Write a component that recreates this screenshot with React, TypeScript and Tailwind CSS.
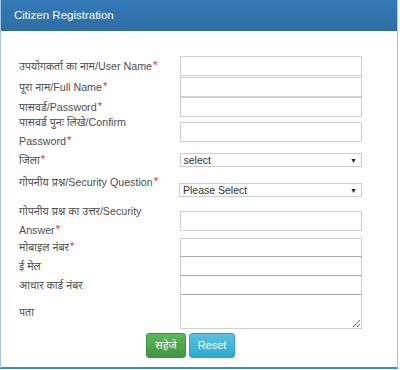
import React from 'react';

const font = { fontFamily: '"Liberation Sans", "Noto Sans", "Noto Sans Devanagari", "Lohit Devanagari", sans-serif' };

const Req = () => <sup className="text-[11px] text-[#e8262a] relative top-[-1px] ml-[1px]">*</sup>;

const inputCls = 'block w-[183px] h-[20px] bg-white border border-[#d0d0d0] outline-none';

function Select({ text }: { text: string }) {
  return (
    <div className="relative w-[183px] h-[14px] border border-[#cfcfcf] bg-white flex items-center">
      <span className="pl-[3px] text-[10.5px] leading-none text-[#333]">{text}</span>
      <span className="absolute right-[4px] top-[3px] text-[7px] leading-none text-[#222]">▼</span>
    </div>
  );
}

export default function App() {
  return (
    <div className="w-[400px] h-[370px] bg-white" style={font}>
      <div className="w-[398px] h-[369px] border-x border-x-[#a7c6e6] border-b-2 border-b-[#3d8bd0] flex flex-col">
        <div className="h-[31px] bg-gradient-to-b from-[#337ab7] to-[#2e6da4] flex items-center pl-[13px]">
          <span className="text-white text-[11.5px]">Citizen Registration</span>
        </div>

        <div className="pt-[25px] pl-[18px] text-[10.7px] text-[#505050]">
          <div className="w-[343px]">
            <div className="flex items-center h-[20px]">
              <div className="w-[161px]">उपयोगकर्ता का नाम/User Name<Req /></div>
              <input className={inputCls} />
            </div>
            <div className="flex items-center h-[20px] mt-[1px]">
              <div className="w-[161px]">पूरा नाम/Full Name<Req /></div>
              <input className={inputCls} />
            </div>
            <div className="flex items-center h-[20px]">
              <div className="w-[161px]">पासवर्ड/Password<Req /></div>
              <input className={inputCls} />
            </div>
            <div className="flex items-center h-[30px]">
              <div className="w-[161px] leading-[19px]">पासवर्ड पुनः लिखे/Confirm<br />Password<Req /></div>
              <input className={inputCls} />
            </div>
            <div className="flex items-center h-[26px]">
              <div className="w-[161px]">जिला<Req /></div>
              <Select text="select" />
            </div>
            <div className="flex items-start h-[30px]">
              <div className="w-[161px] leading-[19px]">गोपनीय प्रश्न/Security Question<Req /></div>
              <div className="mt-[10px]">
                <Select text="Please Select" />
              </div>
            </div>
            <div className="flex items-center h-[35px]">
              <div className="w-[161px] leading-[19px]">गोपनीय प्रश्न का उत्तर/Security<br />Answer<Req /></div>
              <input className={inputCls + ' h-[19px]'} />
            </div>
            <div className="flex items-center h-[19px]">
              <div className="w-[161px]">मोबाइल नंबर<Req /></div>
              <input className="block w-[183px] h-[19px] bg-white border border-[#d0d0d0] border-b-[#aaaaaa] outline-none" />
            </div>
            <div className="flex items-center h-[19px]">
              <div className="w-[161px]">ई मेल</div>
              <input className="block w-[183px] h-[19px] bg-white border border-[#d0d0d0] border-t-0 border-b-[#aaaaaa] outline-none" />
            </div>
            <div className="flex items-center h-[19px]">
              <div className="w-[161px]">आधार कार्ड नंबर</div>
              <input className="block w-[183px] h-[19px] bg-white border border-[#d0d0d0] border-t-0 border-b-[#aaaaaa] outline-none" />
            </div>
            <div className="flex items-center h-[34px]">
              <div className="w-[161px]">पता</div>
              <textarea className="block w-[183px] h-[34px] bg-white border border-[#d0d0d0] border-t-0 outline-none" />
            </div>
            <div className="flex justify-center gap-[3px] mt-[4px]">
              <button className="w-[40px] h-[25px] rounded-[3px] bg-gradient-to-b from-[#5cb85c] to-[#419641] border border-[#3e8f3e] text-white text-[11px]">सहेजे</button>
              <button className="w-[46px] h-[25px] rounded-[3px] bg-gradient-to-b from-[#5bc0de] to-[#2aabd2] border border-[#28a4c9] text-white text-[11px]">Reset</button>
            </div>
          </div>
        </div>
      </div>
    </div>
  );
}
